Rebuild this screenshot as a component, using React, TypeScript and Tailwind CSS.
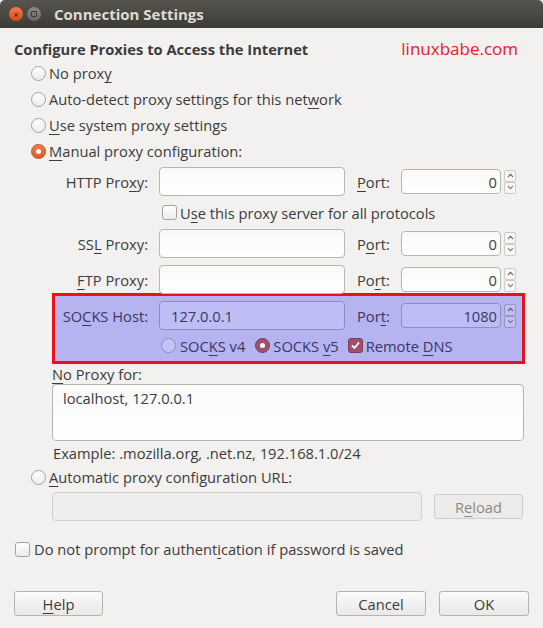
import type { ReactNode } from "react";

const font = { fontFamily: '"Open Sans", "Noto Sans", "DejaVu Sans", sans-serif' };

function U({ children }: { children: ReactNode }) {
  return <span className="underline underline-offset-[3px] decoration-1">{children}</span>;
}

function Radio({ on = false, tint = false }: { on?: boolean; tint?: boolean }) {
  if (on) {
    return (
      <span
        className={
          "flex h-[15px] w-[15px] shrink-0 items-center justify-center rounded-full border " +
          (tint ? "border-[#7a3d5c] bg-[#a0506c]" : "border-[#c04e1e] bg-gradient-to-b from-[#f07d4a] to-[#dd5a25]")
        }
      >
        <span className="h-[5px] w-[5px] rounded-full bg-white" />
      </span>
    );
  }
  return (
    <span
      className={
        "h-[15px] w-[15px] shrink-0 rounded-full border " +
        (tint ? "border-[#8e8cb8] bg-[#c4c2f6]" : "border-[#a6a39c] bg-gradient-to-b from-white to-[#ecebea]")
      }
    />
  );
}

function Check({ on = false, tint = false }: { on?: boolean; tint?: boolean }) {
  if (on) {
    return (
      <span className="flex h-[15px] w-[15px] shrink-0 items-center justify-center rounded-[3px] border border-[#7a3d5c] bg-[#a0506c]">
        <svg width="11" height="11" viewBox="0 0 11 11">
          <path d="M2 5.5 L4.5 8 L9 2.5" fill="none" stroke="white" strokeWidth="1.8" />
        </svg>
      </span>
    );
  }
  return (
    <span
      className={
        "h-[15px] w-[15px] shrink-0 rounded-[3px] border " +
        (tint ? "border-[#8e8cb8] bg-[#c4c2f6]" : "border-[#a6a39c] bg-gradient-to-b from-white to-[#ecebea]")
      }
    />
  );
}

function Spin({ tint = false }: { tint?: boolean }) {
  const box =
    "flex h-[12px] w-[12px] items-center justify-center rounded-[2px] border " +
    (tint ? "border-[#9896c4] bg-[#c0bef4]" : "border-[#cfccc6] bg-[#f6f6f5]");
  return (
    <div className="ml-[3px] flex flex-col">
      <span className={box}>
        <svg width="7" height="5" viewBox="0 0 7 5">
          <path d="M1 4 L3.5 1.3 L6 4" fill="none" stroke="#555" strokeWidth="1.1" />
        </svg>
      </span>
      <span className={box}>
        <svg width="7" height="5" viewBox="0 0 7 5">
          <path d="M1 1 L3.5 3.7 L6 1" fill="none" stroke="#777" strokeWidth="1.1" />
        </svg>
      </span>
    </div>
  );
}

function ProxyRow({
  label,
  port,
  host = "",
  value = "0",
  tint = false,
}: {
  label: ReactNode;
  port: ReactNode;
  host?: string;
  value?: string;
  tint?: boolean;
}) {
  const field = tint
    ? "border-[#8f8dbd] bg-[#bfbdf5]"
    : "border-[#b9b6b0] bg-gradient-to-b from-[#f9f9f9] to-white";
  return (
    <div className="flex items-center">
      <div className="w-[93px] whitespace-nowrap text-right">{label}</div>
      <div className={"ml-[11px] flex h-[29px] w-[186px] items-center rounded-[4px] border px-[11px] " + field}>{host}</div>
      <div className="ml-[12px] w-[44px]">{port}</div>
      <div className={"flex h-[25px] w-[100px] items-center justify-end rounded-[4px] border pr-[3px] " + field}>{value}</div>
      <Spin tint={tint} />
    </div>
  );
}

function Button({ children, className = "" }: { children: ReactNode; className?: string }) {
  return (
    <div
      className={
        "flex h-[25px] items-center justify-center rounded-[3px] border border-[#b6b3ad] bg-gradient-to-b from-[#fbfbfb] to-[#e9e8e6] " +
        className
      }
    >
      {children}
    </div>
  );
}

export default function App() {
  return (
    <div className="h-[628px] w-[543px] overflow-hidden bg-[#f2f1f0] text-[14.7px] leading-[20px] text-[#3c3c3c]" style={font}>
      {/* title bar */}
      <div className="flex h-[28px] items-center rounded-t-[5px] bg-gradient-to-b from-[#57554f] to-[#3b3a36] pl-[9px]">
        <span className="flex h-[14px] w-[14px] items-center justify-center rounded-full bg-gradient-to-b from-[#f57a4a] to-[#d9481b] text-[9px] leading-none text-[#3a1a0d]">
          ×
        </span>
        <span className="ml-[4px] flex h-[14px] w-[14px] items-center justify-center rounded-full bg-gradient-to-b from-[#8a8882] to-[#6a6863]">
          <span className="h-[6px] w-[6px] rounded-[1px] border border-[#3c3b37]" />
        </span>
        <span className="ml-[13px] text-[15px] font-bold text-[#dfdbd2]">Connection Settings</span>
      </div>

      <div className="px-[14px]">
        <div className="mt-[10px] flex h-[22px] items-center">
          <span className="font-bold">Configure Proxies to Access the Internet</span>
          <span className="ml-auto mr-[11px] text-[17px] text-[#e8201e]">linuxbabe.com</span>
        </div>

        <div className="pl-[17px]">
          <div className="flex h-[26px] items-center gap-[3px]">
            <Radio />
            <span>
              No prox<U>y</U>
            </span>
          </div>
          <div className="flex h-[26px] items-center gap-[3px]">
            <Radio />
            <span>
              Auto-detect proxy settings for this net<U>w</U>ork
            </span>
          </div>
          <div className="flex h-[26px] items-center gap-[3px]">
            <Radio />
            <span>
              <U>U</U>se system proxy settings
            </span>
          </div>
          <div className="flex h-[26px] items-center gap-[3px]">
            <Radio on />
            <span>
              <U>M</U>anual proxy configuration:
            </span>
          </div>
        </div>
      </div>

      {/* manual proxy block */}
      <div className="ml-[52px] mt-[3px] w-[473px]">
        <div className="pl-[3px]">
          <ProxyRow
            label={
              <>
                HTTP Pro<U>x</U>y:
              </>
            }
            port={
              <>
                <U>P</U>ort:
              </>
            }
          />
          <div className="flex h-[33px] items-center gap-[3px] pl-[107px]">
            <Check />
            <span>
              U<U>s</U>e this proxy server for all protocols
            </span>
          </div>
          <ProxyRow
            label={
              <>
                SS<U>L</U> Proxy:
              </>
            }
            port={
              <>
                P<U>o</U>rt:
              </>
            }
          />
          <div className="h-[7px]" />
          <ProxyRow
            label={
              <>
                <U>F</U>TP Proxy:
              </>
            }
            port={
              <>
                Po<U>r</U>t:
              </>
            }
          />
        </div>

        <div className="-mt-[1px] border-[3px] border-[#e8121a] bg-[#b5b3f0] pt-[5px] text-[#393864]">
          <ProxyRow
            tint
            host="127.0.0.1"
            value="1080"
            label={
              <>
                SO<U>C</U>KS Host:
              </>
            }
            port={
              <>
                Por<U>t</U>:
              </>
            }
          />
          <div className="flex h-[31px] items-center pl-[106px]">
            <Radio tint />
            <span className="ml-[4px]">
              SOC<U>K</U>S v4
            </span>
            <span className="ml-[10px]">
              <Radio on tint />
            </span>
            <span className="ml-[3px]">
              SOCKS <U>v</U>5
            </span>
            <span className="ml-[9px]">
              <Check on tint />
            </span>
            <span className="ml-[3px]">
              Remote <U>D</U>NS
            </span>
          </div>
        </div>

        <div className="flex h-[20px] items-center">
          <span>
            <U>N</U>o Proxy for:
          </span>
        </div>
        <div className="h-[57px] w-[472px] rounded-[4px] border border-[#b9b6b0] bg-gradient-to-b from-[#f9f9f9] to-white px-[10px] pt-[3px]">
          localhost, 127.0.0.1
        </div>
        <div className="flex h-[23px] items-center pl-[1px]">Example: .mozilla.org, .net.nz, 192.168.1.0/24</div>
      </div>

      <div className="ml-[31px] flex h-[26px] items-center gap-[3px]">
        <Radio />
        <span>
          <U>A</U>utomatic proxy configuration URL:
        </span>
      </div>
      <div className="ml-[52px] mt-[2px] flex items-center">
        <div className="h-[29px] w-[370px] rounded-[4px] border border-[#d3d0cb] bg-[#efeeed]" />
        <div className="ml-[12px] flex h-[25px] w-[89px] items-center justify-center rounded-[3px] border border-[#d0cdc8] bg-[#ecebea] text-[#8b8a88]">
          <span>
            R<U>e</U>load
          </span>
        </div>
      </div>

      <div className="ml-[15px] mt-[15px] flex h-[26px] items-center gap-[4px]">
        <Check />
        <span>
          Do not prompt for authent<U>i</U>cation if password is saved
        </span>
      </div>

      <div className="mx-[14px] mt-[29px] flex items-center">
        <Button className="w-[89px]">
          <span>
            <U>H</U>elp
          </span>
        </Button>
        <Button className="ml-auto w-[90px]">Cancel</Button>
        <Button className="ml-[13px] w-[90px]">OK</Button>
      </div>
    </div>
  );
}
